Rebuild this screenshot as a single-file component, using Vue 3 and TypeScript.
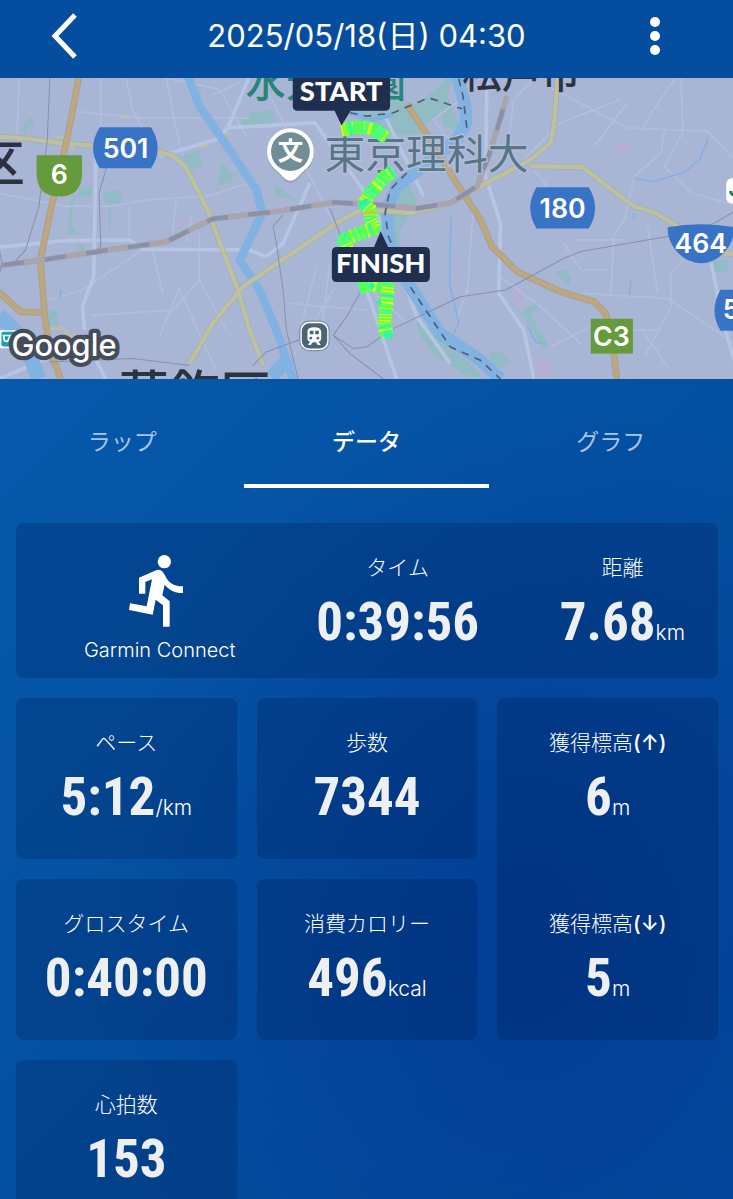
<script setup lang="ts">
import { ref } from 'vue'

interface Metric {
  label: string
  arrow?: string
  value: string
  unit?: string
}

interface Segment {
  d: string
  color: string
}

const tabs = ['ラップ', 'データ', 'グラフ']
const activeTab = ref('データ')

const summary: Metric[] = [
  { label: 'タイム', value: '0:39:56' },
  { label: '距離', value: '7.68', unit: 'km' },
]

const cards: Metric[] = [
  { label: 'ペース', value: '5:12', unit: '/km' },
  { label: '歩数', value: '7344' },
  { label: 'グロスタイム', value: '0:40:00' },
  { label: '消費カロリー', value: '496', unit: 'kcal' },
  { label: '心拍数', value: '153' },
]

const elevation: Metric[] = [
  { label: '獲得標高', arrow: '(↑)', value: '6', unit: 'm' },
  { label: '獲得標高', arrow: '(↓)', value: '5', unit: 'm' },
]

const paceColors = ['#4dff5e', '#66ff4c', '#52ff70', '#96ff30', '#4dff66', '#ccfa20', '#40fa98', '#6fff3c', '#e0f61a', '#52ff6c', '#2ef2a8']

const routes: number[][][] = [
  [[1028, 156], [1062, 148], [1100, 148], [1130, 158], [1158, 178]],
  [[1178, 280], [1150, 298], [1132, 322], [1108, 348], [1092, 376], [1112, 396], [1112, 424], [1124, 450], [1085, 462], [1055, 474], [1030, 484], [1042, 510]],
  [[1080, 626], [1110, 618], [1146, 624], [1164, 625], [1160, 660], [1156, 700], [1154, 740], [1160, 768]],
]

function bands(points: number[][], seed: number): Segment[] {
  const out: Segment[] = []
  let n = seed
  for (let i = 1; i < points.length; i++) {
    const [ax, ay] = points[i - 1]
    const [bx, by] = points[i]
    const length = Math.hypot(bx - ax, by - ay)
    const nx = -(by - ay) / length
    const ny = (bx - ax) / length
    const count = Math.ceil(length / 5)
    for (let k = 0; k <= count; k++) {
      const x = ax + ((bx - ax) * k) / count
      const y = ay + ((by - ay) * k) / count
      const half = 18 + ((n * 5) % 4)
      out.push({
        d: `M${(x - nx * half).toFixed(0)} ${(y - ny * half).toFixed(0)}L${(x + nx * half).toFixed(0)} ${(y + ny * half).toFixed(0)}`,
        color: paceColors[(n * 7 + ((n * n) % 5)) % paceColors.length],
      })
      n++
    }
  }
  return out
}

const segments = routes.flatMap((points, i) => bands(points, i * 4 + 1))
const routeLines = routes.map((points) => points.map((p) => p.join(',')).join(' '))
</script>

<template>
  <div class="app">
    <header class="bar">
      <button class="icon-button" type="button" aria-label="戻る">
        <svg width="28" height="46" viewBox="0 0 28 46"><path d="M25 2 5 23 25 44" fill="none" stroke="#fff" stroke-width="5" /></svg>
      </button>
      <h1 class="title">2025/05/18(日) 04:30</h1>
      <button class="icon-button" type="button" aria-label="メニュー">
        <svg width="12" height="40" viewBox="0 0 12 40" fill="#fff"><circle cx="6" cy="6" r="5" /><circle cx="6" cy="20" r="5" /><circle cx="6" cy="34" r="5" /></svg>
      </button>
    </header>

    <main class="content">
      <svg class="map" viewBox="0 0 2199 900" preserveAspectRatio="xMidYMid slice" role="img" aria-label="ランニングコースの地図">
        <rect width="2199" height="900" fill="#a8b5d5" />
        <g transform="translate(0 -6)">
          <!-- parks -->
          <g fill="#91bcc5">
            <path d="M70 160 85 125 105 125 102 152 85 150 82 182ZM545 240 600 222 608 268 565 285ZM655 330 665 255 690 285 710 292 695 315ZM242 335 280 328 275 360 240 362ZM312 350 366 340 366 384 320 378ZM330 382 336 382 335 462 328 462ZM210 375 238 352 222 380 218 445 232 470 208 475ZM232 500 255 505 250 535ZM150 700 178 698 174 748 148 745ZM582 8 605 35 600 80ZM725 120 750 118 745 152 728 152Z" />
            <path d="M755 110 822 102 820 152 735 150ZM1010 60 1180 50 1180 70 1245 82 1275 62 1330 20 1318 110 1240 180 1150 165 1030 105ZM828 325 855 345 888 370 825 358ZM1360 0 1340 60 1385 165 1330 150 1318 90 1330 8ZM1215 300 1250 370 1195 470 1210 560 1270 690 1180 600 1150 480 1155 370Z" />
            <path d="M1250 720 1330 800 1410 860 1450 906 1390 890 1300 830 1250 760ZM1610 605 1648 618 1638 648ZM1665 585 1695 578 1712 605 1705 628ZM1560 705 1612 680 1608 700 1590 715 1645 805 1630 815ZM1465 828 1500 825 1525 850 1515 870 1475 872ZM2135 552 2180 548 2178 586 2138 586Z" />
          </g>
          <g fill="#b5b0cf">
            <path d="M530 430 555 435 548 455 532 450ZM1848 205 1888 205 1890 230 1850 230ZM1535 630 1572 645 1565 685 1540 670ZM1605 845 1640 850 1655 906 1610 906Z" />
          </g>
          <!-- minor roads -->
          <g fill="none" stroke="#b1bfdd" stroke-width="5">
            <path d="M60 0 55 180M305 0 305 150M380 0 400 100 430 160M500 0 520 110 550 240M215 105 430 125 750 125M0 350 200 390 330 390 450 370 620 360 750 320M390 390 390 480M530 370 520 470M575 420 560 500M600 470 600 610 520 700 280 715M430 520 250 640 150 670M540 635 480 780M540 635 590 750 650 880M600 610 680 760M460 520 490 650M470 0 660 40 740 180M630 60 720 20" />
            <path d="M780 0 860 160 1000 440M950 570 900 760M990 560 960 800M1000 640 880 840M870 680 1100 700M1060 590 1220 740M1420 380 1400 660M1400 640 1370 730M1380 70 1300 130 1390 250" />
            <path d="M1860 70 1680 140 1570 250M1640 30 1880 155 1990 160 2120 165 2199 250M1880 80 1780 210M2020 10 1965 90 1920 165M2040 0 2045 170 1990 270 2070 350 2199 385M1990 165 1980 230 1900 300 1870 430 1838 480 1830 660M1610 0 1540 70 1520 230M1600 280 1640 330M1720 490 1870 490M1690 500 1740 580 1820 580M1940 450 1960 580 1970 650M2140 440 2010 590 2010 690 1930 840M1740 650 2000 665 2199 800M1840 760 1970 760M1920 755 2000 870M1650 810 1790 740M1500 600 1620 690 1740 800M1590 440 1660 410" />
          </g>
          <g fill="none" stroke="#b6c5e4" stroke-width="11" stroke-linejoin="round">
            <path d="M0 512 200 492 390 490 430 518 750 520 800 540 850 500 930 320M290 240 284 600 250 690 256 760M685 155 650 190 480 240M750 0 685 155 945 140 1010 230 1110 370 1170 500 1250 720 1350 860M0 906 180 830M256 780 320 906M1150 110 1270 360M1100 640 1190 906M1460 0 1455 300 1500 440 1495 650 1570 760 1600 906M2130 560 2170 750 2199 850" />
          </g>
          <!-- rivers -->
          <g fill="none" stroke="#82b2e2" stroke-linejoin="round">
            <path d="M565 0 600 90 700 235 770 340 788 410 720 550 780 640 830 760 880 906" stroke-width="25" />
            <path d="M0 715 75 790 120 906" stroke-width="45" />
            <path d="M1370 0 1395 90 1398 140 1370 190 1270 270 1190 330 1160 400 1168 500 1230 630 1320 770 1440 850 1500 906" stroke-width="37" />
            <path d="M815 900 870 840" stroke-width="40" />
            <path d="M1050 110 1120 130 1180 115" stroke-width="14" />
            <path d="M1900 305 1955 316 2050 288 2095 250 2122 188M1580 745 1605 795 1625 800M1352 420 1348 620 1375 740 1350 790M1900 410 1898 430M1890 610 1885 660M185 640 183 665" stroke-width="5" />
          </g>
          <!-- main roads -->
          <g fill="none" stroke-linejoin="round">
            <g stroke="#a4adb2" stroke-width="17">
              <path d="M0 182 90 188 180 200 280 208M470 225 520 238 560 275 620 390 715 640 750 760 790 866M570 860 640 740 730 630 1010 440 1070 406 1140 402 1230 410 1350 380 1440 330 1590 250 1650 200 1660 150 1672 0M1590 270 1745 272 1820 330 1900 390 1960 408 2030 450M2160 530 2199 532" />
            </g>
            <g stroke="#bdc19f" stroke-width="13">
              <path d="M0 182 90 188 180 200 280 208M470 225 520 238 560 275 620 390 715 640 750 760 790 866M570 860 640 740 730 630 1010 440 1070 406 1140 402 1230 410 1350 380 1440 330 1590 250 1650 200 1660 150 1672 0M1590 270 1745 272 1820 330 1900 390 1960 408 2030 450M2160 530 2199 532" />
              <path d="M365 123H385M605 214 625 205M678 176 692 170M168 186 196 182 225 222M130 755 190 755 230 790" stroke-width="7" />
            </g>
            <path d="M240 0 208 170 160 380 124 550 138 720 150 810 185 906M0 645 65 705 128 708M1220 85 1280 175 1350 290 1440 430 1475 510 1550 585 1680 645 1780 675 1815 710 1835 800 1848 906" stroke="#aa9f91" stroke-width="20" />
            <path d="M240 0 208 170 160 380 124 550 138 720 150 810 185 906M0 645 65 705 128 708M1220 85 1280 175 1350 290 1440 430 1475 510 1550 585 1680 645 1780 675 1815 710 1835 800 1848 906" stroke="#bda77c" stroke-width="14" />
          </g>
          <!-- railways -->
          <g fill="none">
            <path d="M0 568 130 550 310 523 500 496 640 427 830 405 1000 378 1130 385 1250 396 1350 380 1430 330 1468 230 1520 60" stroke="#a9a4ae" stroke-width="17" />
            <path d="M12 565 130 550 310 523 500 496 640 427 830 405 1000 378 1130 385 1250 396 1350 380 1430 330 1468 230 1520 60" stroke="#8991aa" stroke-width="13" stroke-dasharray="64 62" />
            <path d="M153 0 145 190 120 390 80 520 40 565M322 275 300 350 305 510 290 525M0 515 10 560 0 600M150 855 400 845 570 866M990 395 1030 500 1085 640 1040 720 1000 775 1060 815 1100 810 1170 760 1380 660 1515 640 1690 545 1740 525 2000 480 2140 440 2199 405M1000 775 1050 830 1150 906M760 865 800 825 910 785M895 906 860 760 850 640 830 500 820 450 850 415" stroke="#8590ad" stroke-width="3" />
            <path d="M1050 110 1100 120 1180 110 1285 65 1385 98M1375 8 1388 60 1400 160M1220 290 1170 340 1155 410 1165 480 1230 630 1290 720 1350 810 1440 850 1500 906" stroke="#505d77" stroke-width="5" stroke-dasharray="23 19" />
          </g>
        </g>

        <g class="place">
          <text x="-72" y="312" font-size="150">区</text>
          <text x="358" y="1002" font-size="152">葛飾区</text>
          <text x="1386" y="31" font-size="118">松戸市</text>
          <text class="park" x="738" y="58" font-size="120">水元公園</text>
        </g>
        <text class="school" x="974" y="272" font-size="122">東京理科大</text>

        <!-- road shields -->
        <path d="M302 147H455Q475 176 475 209T455 270H302Q282 240 282 209T302 147Z" fill="#3973c6" />
        <path d="M1608 327H1764Q1783 357 1783 389T1764 450H1608Q1589 420 1589 389T1608 327Z" fill="#3973c6" />
        <path d="M2158 633H2220V756H2158Q2140 725 2140 695T2158 633Z" fill="#3973c6" />
        <path d="M2000 446Q2100 428 2199 446C2199 505 2150 554 2100 554S1998 505 2000 446Z" fill="#3973c6" />
        <path d="M113 231H249V283Q249 354 181 354T113 283Z" fill="#659b3d" />
        <rect x="1770" y="720" width="126" height="104" fill="#659b3d" />
        <g class="road">
          <text x="379" y="239">501</text>
          <text x="181" y="317">6</text>
          <text x="1686" y="419">180</text>
          <text x="2099" y="522">464</text>
          <text x="2190" y="722">5</text>
          <text x="1832" y="802">C3</text>
        </g>

        <!-- campus and station pins -->
        <path d="M872 313C853 313 846 291 824 276A70 70 0 1 1 920 276C898 291 891 313 872 313Z" fill="#7886a2" opacity=".5" />
        <path d="M872 307C853 307 846 286 824 271A70 70 0 1 1 920 271C898 286 891 307 872 307Z" fill="#fff" />
        <circle cx="872" cy="220" r="58" fill="#738d97" />
        <text class="campus" x="872" y="246">文</text>
        <rect x="900" y="727" width="88" height="88" rx="28" fill="#fff" stroke="#8290a9" stroke-width="4" />
        <rect x="906" y="733" width="76" height="76" rx="23" fill="#4b6673" />
        <path d="M923 758Q923 745 943 745T964 758V779Q964 787 956 788L963 798H954L948 790H939L933 798H924L931 788Q923 787 923 779Z" fill="#fff" />
        <path d="M930 756H941V766H930ZM946 756H957V766H946Z" fill="#4b6673" />
        <circle cx="933" cy="778" r="4" fill="#4b6673" /><circle cx="954" cy="778" r="4" fill="#4b6673" />
        <rect x="2175" y="300" width="80" height="75" rx="16" fill="#fff" />
        <path d="M2188 338Q2190 354 2206 348V335" fill="none" stroke="#118348" stroke-width="9" />

        <polyline v-for="line in routeLines" :key="line" :points="line" fill="none" stroke="#52ff66" stroke-width="36" stroke-linejoin="round" />
        <path v-for="(segment, i) in segments" :key="i" :d="segment.d" :stroke="segment.color" stroke-width="7" />
        <path d="M1094 404 1126 402" stroke="#f5ae35" stroke-width="7" />
        <path d="M1078 380 1100 366M1142 668 1132 676M1110 618 1122 626" stroke="#2ef0a8" stroke-width="14" />
        <circle cx="1164" cy="768" r="14" fill="#38f7a0" />

        <!-- start and finish flags -->
        <path d="M879 0H1170V83Q1170 98 1155 98H1052L1025 142 1004 98H894Q879 98 879 83Z" fill="#202e50" />
        <path d="M1142 458 1164 505H1274Q1289 505 1289 520V595Q1289 610 1274 610H1011Q996 610 996 595V520Q996 505 1011 505H1122Z" fill="#202e50" />
        <g class="flag">
          <text x="1024" y="70">START</text>
          <text x="1142" y="583">FINISH</text>
        </g>

        <rect x="0" y="754" width="66" height="54" rx="8" fill="#fff" />
        <rect x="8" y="759" width="53" height="44" rx="6" fill="#169cbd" />
        <path d="M14 770 34 770 26 788 17 786ZM42 774 34 788" fill="none" stroke="#fff" stroke-width="5" />
        <text class="google" x="38" y="830">Google</text>
      </svg>

      <nav class="tabs" role="tablist">
        <button
          v-for="tab in tabs"
          :key="tab"
          class="tab"
          :class="{ active: tab === activeTab }"
          type="button"
          role="tab"
          :aria-selected="tab === activeTab"
          @click="activeTab = tab"
        >
          {{ tab }}
        </button>
      </nav>

      <section class="summary">
        <div class="source">
          <svg width="64" height="74" viewBox="51 44 192 222" fill="#fff" aria-hidden="true">
            <circle cx="160" cy="67" r="20" />
            <path d="M84 163V115L137 92Q151 88 159 103L168 119C179 134 195 142 216 141V161C194 162 175 153 161 136L154 168 176 186V262H156V198L134 181 125 226 54 212 57 192 107 201 123 120 103 128V163Z" />
          </svg>
          <span class="source-name">Garmin Connect</span>
        </div>
        <div v-for="item in summary" :key="item.label" class="metric">
          <span class="label">{{ item.label }}</span>
          <span class="reading"><strong>{{ item.value }}</strong><small v-if="item.unit">{{ item.unit }}</small></span>
        </div>
      </section>

      <section class="grid">
        <article v-for="item in cards" :key="item.label" class="card metric">
          <span class="label">{{ item.label }}</span>
          <span class="reading"><strong>{{ item.value }}</strong><small v-if="item.unit">{{ item.unit }}</small></span>
        </article>
        <article class="card tall">
          <div v-for="item in elevation" :key="item.arrow" class="metric">
            <span class="label">{{ item.label }}<span class="arrow">{{ item.arrow }}</span></span>
            <span class="reading"><strong>{{ item.value }}</strong><small>{{ item.unit }}</small></span>
          </div>
        </article>
      </section>
    </main>
  </div>
</template>

<style>
body {
  margin: 0;
  background: #03489b;
}
</style>

<style scoped>
.app {
  display: flex;
  flex-direction: column;
  height: 100vh;
  overflow: hidden;
  color: #fff;
  font-family: Inter, "Noto Sans CJK JP", sans-serif;
  background:
    radial-gradient(ellipse 60% 45% at 72% 78%, rgba(0, 50, 142, 0.6), rgba(0, 50, 142, 0)),
    linear-gradient(135deg, #0659ab 20%, #0450a0 60%, #044a9b);
}

button {
  padding: 0;
  border: 0;
  background: none;
  color: inherit;
  font: inherit;
  cursor: pointer;
}

.bar {
  display: flex;
  flex: none;
  align-items: center;
  justify-content: space-between;
  height: 78px;
  padding: 0 62px 6px 48px;
  box-sizing: border-box;
  background: #054e9f;
}

.icon-button {
  display: flex;
  align-items: center;
  justify-content: center;
  width: 32px;
  height: 48px;
}

.title {
  margin: 0;
  padding-left: 14px;
  font-size: 31px;
  font-weight: 400;
  line-height: 40px;
  white-space: nowrap;
}

.content {
  flex: 1;
  min-height: 0;
  overflow-y: auto;
  scrollbar-width: none;
}

.map {
  display: block;
  width: 100%;
  height: 301px;
}

.place,
.school,
.campus {
  font-family: "Noto Sans CJK JP", sans-serif;
}

.place {
  fill: #2c323f;
  font-weight: 500;
}

.park {
  fill: #258675;
}

.school {
  fill: #597485;
  stroke: #b3c0db;
  stroke-width: 8px;
  paint-order: stroke;
}

.road {
  fill: #fff;
  font-size: 80px;
  font-weight: 600;
  text-anchor: middle;
}

.campus {
  fill: #fff;
  font-size: 76px;
  font-weight: 700;
  text-anchor: middle;
}

.flag {
  fill: #fff;
  font-family: Lato, sans-serif;
  font-size: 82px;
  font-weight: 900;
  text-anchor: middle;
}

.google {
  fill: #fff;
  stroke: #454c5c;
  stroke-width: 26px;
  stroke-linejoin: round;
  paint-order: stroke;
  font-size: 92px;
  font-weight: 500;
}

.tabs {
  display: grid;
  grid-template-columns: repeat(3, 1fr);
}

.tab {
  height: 109px;
  padding-top: 20px;
  border-bottom: 4px solid transparent;
  color: #a9c4e6;
  font-size: 23px;
  font-weight: 400;
  line-height: 84px;
}

.tab.active {
  border-color: #fff;
  color: #fff;
  font-weight: 500;
}

.summary {
  display: flex;
  justify-content: space-between;
  margin: 35px 15px 20px 16px;
  padding: 0 33px 0 68px;
  min-height: 155px;
  border-radius: 8px;
  background: rgba(0, 25, 80, 0.25);
}

.source {
  display: flex;
  flex-direction: column;
  align-items: center;
  gap: 8px;
  padding-top: 31px;
}

.source-name {
  font-size: 20px;
  font-weight: 300;
  line-height: 28px;
}

.grid {
  display: grid;
  grid-template-columns: repeat(3, 1fr);
  grid-auto-rows: 161px;
  gap: 20px;
  margin: 0 15px 20px 16px;
}

.card {
  border-radius: 8px;
  background: rgba(0, 25, 80, 0.25);
}

.tall {
  display: grid;
  grid-row: 1 / span 2;
  grid-column: 3;
  grid-auto-rows: 161px;
  gap: 20px;
}

.metric {
  display: flex;
  flex-direction: column;
  align-items: center;
  gap: 8px;
  padding-top: 29px;
}

.label {
  font-size: 21px;
  font-weight: 300;
  line-height: 32px;
  white-space: nowrap;
}

.arrow {
  font-weight: 500;
}

.reading {
  line-height: 60px;
  white-space: nowrap;
}

.reading strong {
  color: #eeeff1;
  font-family: "Roboto Condensed", "Liberation Sans Narrow", Roboto, sans-serif;
  font-size: 53px;
  font-weight: 700;
}

.reading small {
  font-size: 21px;
  font-weight: 300;
}
</style>
